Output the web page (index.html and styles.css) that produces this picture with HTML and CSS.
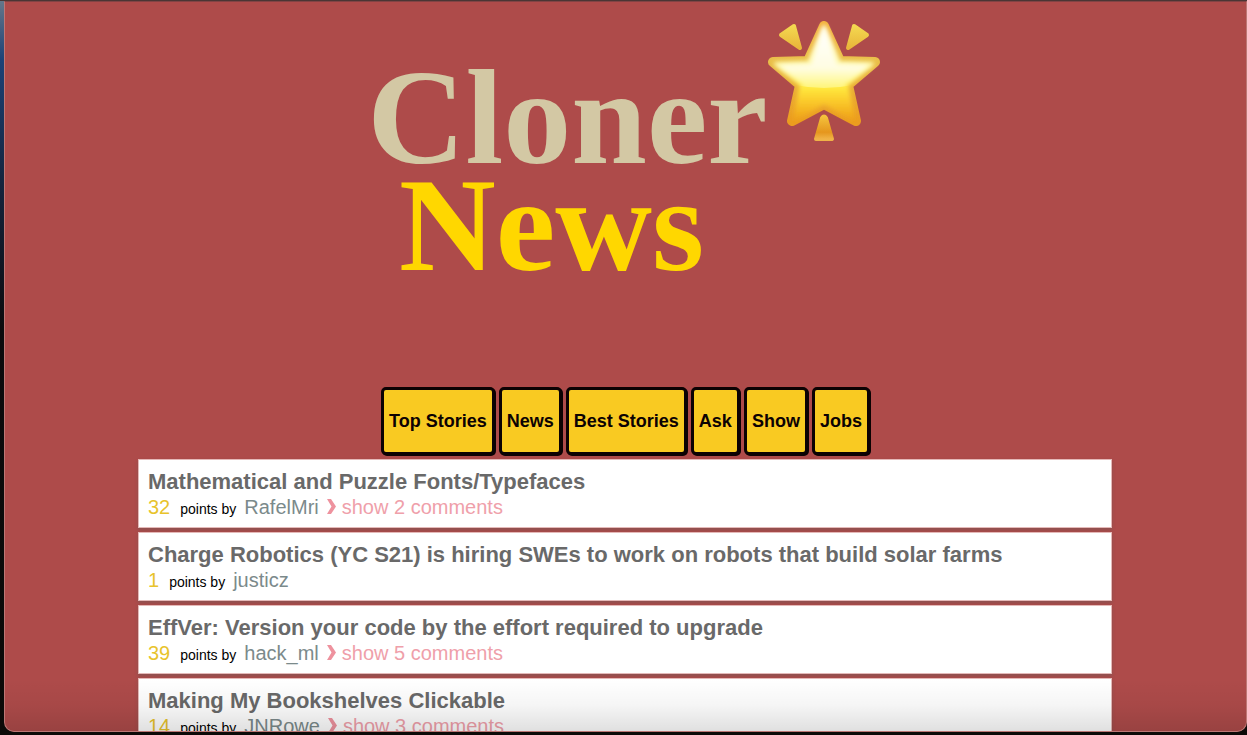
FILE: index.html
```html
<!DOCTYPE html>
<html lang="en">
<head>
<meta charset="utf-8">
<title>Cloner News</title>
<link rel="stylesheet" href="styles.css">
</head>
<body>
<div class="window">
  <header class="masthead">
    <h1 class="wordmark"><span class="cloner">Cloner</span><span class="news">News</span></h1>
    <svg class="star" viewBox="0 0 112 122" aria-hidden="true">
      <defs>
        <linearGradient id="body" x1="0" y1="0" x2="0" y2="1">
          <stop offset="0" stop-color="#fffbe0"/>
          <stop offset=".45" stop-color="#fff9a6"/>
          <stop offset=".66" stop-color="#ffe93f"/>
          <stop offset=".8" stop-color="#fbcb2c"/>
          <stop offset="1" stop-color="#efa218"/>
        </linearGradient>
        <linearGradient id="edge" x1="0" y1="0" x2="0" y2="1">
          <stop offset="0" stop-color="#f3b13c"/>
          <stop offset=".35" stop-color="#e9bf4a"/>
          <stop offset="1" stop-color="#eb9c20"/>
        </linearGradient>
        <linearGradient id="shine" x1="0" y1="0" x2="0" y2="1">
          <stop offset="0" stop-color="#fff"/>
          <stop offset=".45" stop-color="#fffde2"/>
          <stop offset=".68" stop-color="#fff98f" stop-opacity=".7"/>
        </linearGradient>
        <linearGradient id="ray" x1="0" y1="0" x2="0" y2="1">
          <stop offset="0" stop-color="#f4d850"/>
          <stop offset="1" stop-color="#e9b63a"/>
        </linearGradient>
        <linearGradient id="tail" x1="0" y1="0" x2="0" y2="1">
          <stop offset="0" stop-color="#f4c13b"/>
          <stop offset=".7" stop-color="#e5961d"/>
          <stop offset="1" stop-color="#f0b347"/>
        </linearGradient>
        <filter id="soft"><feGaussianBlur stdDeviation="2"/></filter>
        <clipPath id="upper"><path d="M0 0H112V56Q56 78 0 56Z"/></clipPath>
      </defs>
      <g stroke-linejoin="round">
        <path d="M56 5 72 40 107 41 80 64 88 100 56 83 24 100 32 64 5 41 40 40Z" fill="url(#edge)" stroke="url(#edge)" stroke-width="10"/>
        <path d="M56 6 71 42 104 43 78 64 85 98 56 81 27 98 34 64 8 43 41 42Z" fill="url(#body)" stroke="url(#body)" stroke-width="4" filter="url(#soft)"/>
        <path d="M56 8 69 43 101 44 77 64 84 95 56 80 28 95 35 64 11 44 43 43Z" fill="url(#shine)" clip-path="url(#upper)" filter="url(#soft)"/>
        <path d="M13 14 26 5 32 27Z" fill="url(#ray)" stroke="url(#ray)" stroke-width="4"/>
        <path d="M99 14 86 5 80 27Z" fill="url(#ray)" stroke="url(#ray)" stroke-width="4"/>
        <path d="M54 97Q56 94 58 97L64 118H48Z" fill="url(#tail)" stroke="url(#tail)" stroke-width="4"/>
      </g>
    </svg>
  </header>
  <nav class="tabs" aria-label="Story lists">
    <button class="tab">Top Stories</button>
    <button class="tab">News</button>
    <button class="tab">Best Stories</button>
    <button class="tab">Ask</button>
    <button class="tab">Show</button>
    <button class="tab">Jobs</button>
  </nav>
  <main class="stories">
    <article class="story">
      <h2 class="title"><a href="#">Mathematical and Puzzle Fonts/Typefaces</a></h2>
      <div class="meta"><span class="score">32</span><span class="by">points by</span><a class="user" href="#">RafelMri</a><button class="toggle"><svg class="chevron" viewBox="0 0 9 15" aria-hidden="true"><path d="M0 0H4L9 7.500 4 15H0L4.500 7.500Z"/></svg>show 2 comments</button></div>
    </article>
    <article class="story">
      <h2 class="title"><a href="#">Charge Robotics (YC S21) is hiring SWEs to work on robots that build solar farms</a></h2>
      <div class="meta"><span class="score">1</span><span class="by">points by</span><a class="user" href="#">justicz</a></div>
    </article>
    <article class="story">
      <h2 class="title"><a href="#">EffVer: Version your code by the effort required to upgrade</a></h2>
      <div class="meta"><span class="score">39</span><span class="by">points by</span><a class="user" href="#">hack_ml</a><button class="toggle"><svg class="chevron" viewBox="0 0 9 15" aria-hidden="true"><path d="M0 0H4L9 7.500 4 15H0L4.500 7.500Z"/></svg>show 5 comments</button></div>
    </article>
    <article class="story">
      <h2 class="title"><a href="#">Making My Bookshelves Clickable</a></h2>
      <div class="meta"><span class="score">14</span><span class="by">points by</span><a class="user" href="#">JNRowe</a><button class="toggle"><svg class="chevron" viewBox="0 0 9 15" aria-hidden="true"><path d="M0 0H4L9 7.500 4 15H0L4.500 7.500Z"/></svg>show 3 comments</button></div>
    </article>
  </main>
</div>
</body>
</html>
```
FILE: styles.css
```css
* {
  box-sizing: border-box;
}

body {
  margin: 0;
  height: 100vh;
  padding: 1px 0 3px 4px;
  overflow: hidden;
  background: linear-gradient(#4a3534 0 1px, transparent 1px), linear-gradient(#66788a, #1c4277 60px, #14253f 180px, #0c0b0d 330px, #0c0a08);
  font-family: "Liberation Sans", Arial, sans-serif;
}

.window {
  position: relative;
  height: 100%;
  overflow: hidden;
  background: #ae4b4a;
  border: 1px solid #bd7775;
  border-top-color: #824344;
  border-radius: 0 0 10px 10px;
}

.window::after {
  content: "";
  position: absolute;
  inset: auto 0 0 0;
  height: 52px;
  pointer-events: none;
  background: linear-gradient(rgba(0, 0, 0, 0), rgba(0, 0, 0, 0.04) 50%, rgba(0, 0, 0, 0.12));
}

.masthead {
  display: flex;
  justify-content: center;
  align-items: flex-start;
  padding: 19px 4px 0 0;
}

.wordmark {
  display: flex;
  flex-direction: column;
  align-items: center;
  margin: 0;
  padding: 42px 0 108px;
  font: bold 136px/108px "Liberation Serif", "Times New Roman", serif;
}

.cloner {
  color: #d3c8a4;
}

.news {
  padding-right: 32px;
  color: #ffd700;
  font-size: 134px;
}

.star {
  width: 112px;
  height: 122px;
}

.tabs {
  display: flex;
  justify-content: center;
  gap: 4px;
}

.tab {
  height: 68px;
  padding: 0 5px;
  border: 3px solid #0c0203;
  border-radius: 5px;
  box-shadow: 1px 1px #0c0203;
  background: #f9ca22;
  color: #0c0203;
  font: bold 18px/22px "Liberation Sans", Arial, sans-serif;
}

.stories {
  display: flex;
  flex-direction: column;
  gap: 4px;
  padding: 4px 134px 0 133px;
}

.story {
  padding: 9px 9px 7px;
  border: 1px solid #e5b9b8;
  background: #fff;
  box-shadow: 0 2px 3px rgba(90, 90, 90, 0.4);
}

.title {
  margin: 0;
  font-size: 22px;
  line-height: 25px;
}

.title a {
  color: #696969;
  text-decoration: none;
}

.meta {
  display: flex;
  align-items: baseline;
  gap: 8px;
  font-size: 20px;
  line-height: 26px;
}

.score {
  padding-right: 2px;
  color: #e8c32b;
}

.by {
  color: #000;
  font-size: 14px;
  line-height: 18px;
}

.user {
  color: #7b8a8b;
  text-decoration: none;
}

.toggle {
  padding: 0;
  border: 0;
  background: none;
  color: #efa0aa;
  font: inherit;
}

.chevron {
  width: 9px;
  height: 15px;
  margin-right: 6px;
  fill: #ee929e;
}
```
